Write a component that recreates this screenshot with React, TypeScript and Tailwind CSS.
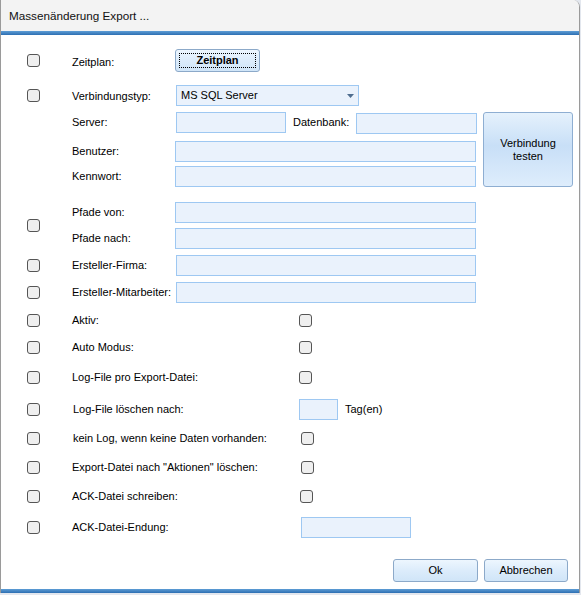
import clsx from 'clsx';
import type { ReactNode } from 'react';

const box = 'h-[21px] shrink-0 border border-[#9ec8f2] bg-[#eaf2fc]';
const btn =
  'flex items-center justify-center shrink-0 border border-[#8ca9c9] rounded-[3px] bg-linear-to-b from-[#edf6fe] via-[#dcecfb] to-[#d0e5f8]';

function Check() {
  return <span className="block w-[13px] h-[13px] rounded-[3px] border border-[#555] bg-[#efefef]" />;
}

function Row({ className, check = true, children }: { className?: string; check?: boolean; children?: ReactNode }) {
  return (
    <div className={clsx('flex items-center shrink-0', className)}>
      <div className="w-[71px] pl-[26px] shrink-0">{check && <Check />}</div>
      {children}
    </div>
  );
}

export default function App() {
  return (
    <div className="w-[581px] h-[595px] bg-[#e3e7ee] overflow-hidden font-['Liberation_Sans',Arial,sans-serif] text-[11px] leading-[13px] text-black">
      <div className="w-[580px] h-[593px] flex flex-col border-x border-[#9a9a9a] bg-white rounded-tr-[7px] overflow-hidden">
        {/* title bar */}
        <div className="h-[31px] shrink-0 bg-[#f3f3f3] pl-[8px] flex items-center text-[11.7px] text-[#111]">
          Massenänderung Export ...
        </div>
        <div className="h-[4px] shrink-0 bg-linear-to-b from-[#5d9dd5] to-[#2c6fb2]" />

        {/* content */}
        <div className="flex-1 flex flex-col">
          <Row className="mt-[14px] h-[23px]">
            <div className="w-[103px] shrink-0 pt-[3px]">Zeitplan:</div>
            <button className={clsx(btn, 'w-[85px] h-[23px] font-bold outline-1 outline-dotted outline-black outline-offset-[-5px]')}>
              Zeitplan
            </button>
          </Row>

          <Row className="mt-[13px] h-[21px]">
            <div className="w-[103px] shrink-0 pt-px">Verbindungstyp:</div>
            <div className={clsx(box, 'ml-px w-[183px] flex items-center pl-[4px] pr-[4px]')}>
              <span>MS SQL Server</span>
              <svg className="ml-auto" width="7" height="4" viewBox="0 0 7 4">
                <polygon points="0,0 7,0 3.5,4" fill="#4f6d8f" />
              </svg>
            </div>
          </Row>

          {/* server block */}
          <Row check={false} className="mt-[6px] items-start">
            <div className="flex flex-col">
              <div className="flex items-center h-[21px]">
                <div className="w-[103px] shrink-0">Server:</div>
                <div className={clsx(box, 'ml-px w-[110px]')} />
                <div className="ml-[7px] w-[63px] shrink-0">Datenbank:</div>
                <div className={clsx(box, 'w-[121px] mt-px')} />
              </div>
              <div className="flex items-center h-[21px] mt-[8px]">
                <div className="w-[103px] shrink-0">Benutzer:</div>
                <div className={clsx(box, 'w-[301px]')} />
              </div>
              <div className="flex items-center h-[21px] mt-[4px]">
                <div className="w-[103px] shrink-0">Kennwort:</div>
                <div className={clsx(box, 'w-[301px]')} />
              </div>
            </div>
            <button className="ml-[6px] w-[90px] h-[75px] shrink-0 flex items-center justify-center text-center leading-[13px] border border-[#8eaed2] rounded-[3px] bg-linear-to-b from-[#e5f1fc] via-[#c8dff7] via-45% to-[#deedfc]">
              Verbindung
              <br />
              testen
            </button>
          </Row>

          {/* pfade */}
          <Row className="mt-[15px]">
            <div className="flex flex-col">
              <div className="flex items-center h-[21px]">
                <div className="w-[103px] shrink-0">Pfade von:</div>
                <div className={clsx(box, 'w-[301px]')} />
              </div>
              <div className="flex items-center h-[21px] mt-[5px]">
                <div className="w-[103px] shrink-0">Pfade nach:</div>
                <div className={clsx(box, 'w-[301px]')} />
              </div>
            </div>
          </Row>

          <Row className="mt-[6px] h-[21px]">
            <div className="w-[104px] shrink-0">Ersteller-Firma:</div>
            <div className={clsx(box, 'w-[300px]')} />
          </Row>
          <Row className="mt-[6px] h-[21px]">
            <div className="w-[104px] shrink-0">Ersteller-Mitarbeiter:</div>
            <div className={clsx(box, 'w-[300px]')} />
          </Row>

          <Row className="mt-[7px] h-[20px]">
            <div className="w-[227px] shrink-0">Aktiv:</div>
            <Check />
          </Row>
          <Row className="mt-[7px] h-[20px]">
            <div className="w-[227px] shrink-0">Auto Modus:</div>
            <Check />
          </Row>
          <Row className="mt-[10px] h-[20px]">
            <div className="w-[227px] shrink-0">Log-File pro Export-Datei:</div>
            <Check />
          </Row>

          <Row className="mt-[12px] h-[21px]">
            <div className="w-[227px] shrink-0 pl-px">Log-File löschen nach:</div>
            <div className={clsx(box, 'w-[39px]')} />
            <div className="ml-[7px]">Tag(en)</div>
          </Row>

          <Row className="mt-[8px] h-[20px]">
            <div className="w-[229px] shrink-0 pl-px">kein Log, wenn keine Daten vorhanden:</div>
            <Check />
          </Row>
          <Row className="mt-[9px] h-[20px]">
            <div className="w-[229px] shrink-0">Export-Datei nach "Aktionen" löschen:</div>
            <Check />
          </Row>
          <Row className="mt-[9px] h-[20px]">
            <div className="w-[228px] shrink-0">ACK-Datei schreiben:</div>
            <Check />
          </Row>
          <Row className="mt-[11px] h-[21px]">
            <div className="w-[229px] shrink-0">ACK-Datei-Endung:</div>
            <div className={clsx(box, 'w-[110px]')} />
          </Row>

          <div className="mt-[21px] flex justify-end gap-[6px] pr-[11px]">
            <button className={clsx(btn, 'w-[85px] h-[23px]')}>Ok</button>
            <button className={clsx(btn, 'w-[84px] h-[23px]')}>Abbrechen</button>
          </div>
        </div>

        <div className="h-[4px] shrink-0 bg-linear-to-b from-[#5d9dd5] to-[#2c6fb2]" />
      </div>
    </div>
  );
}
